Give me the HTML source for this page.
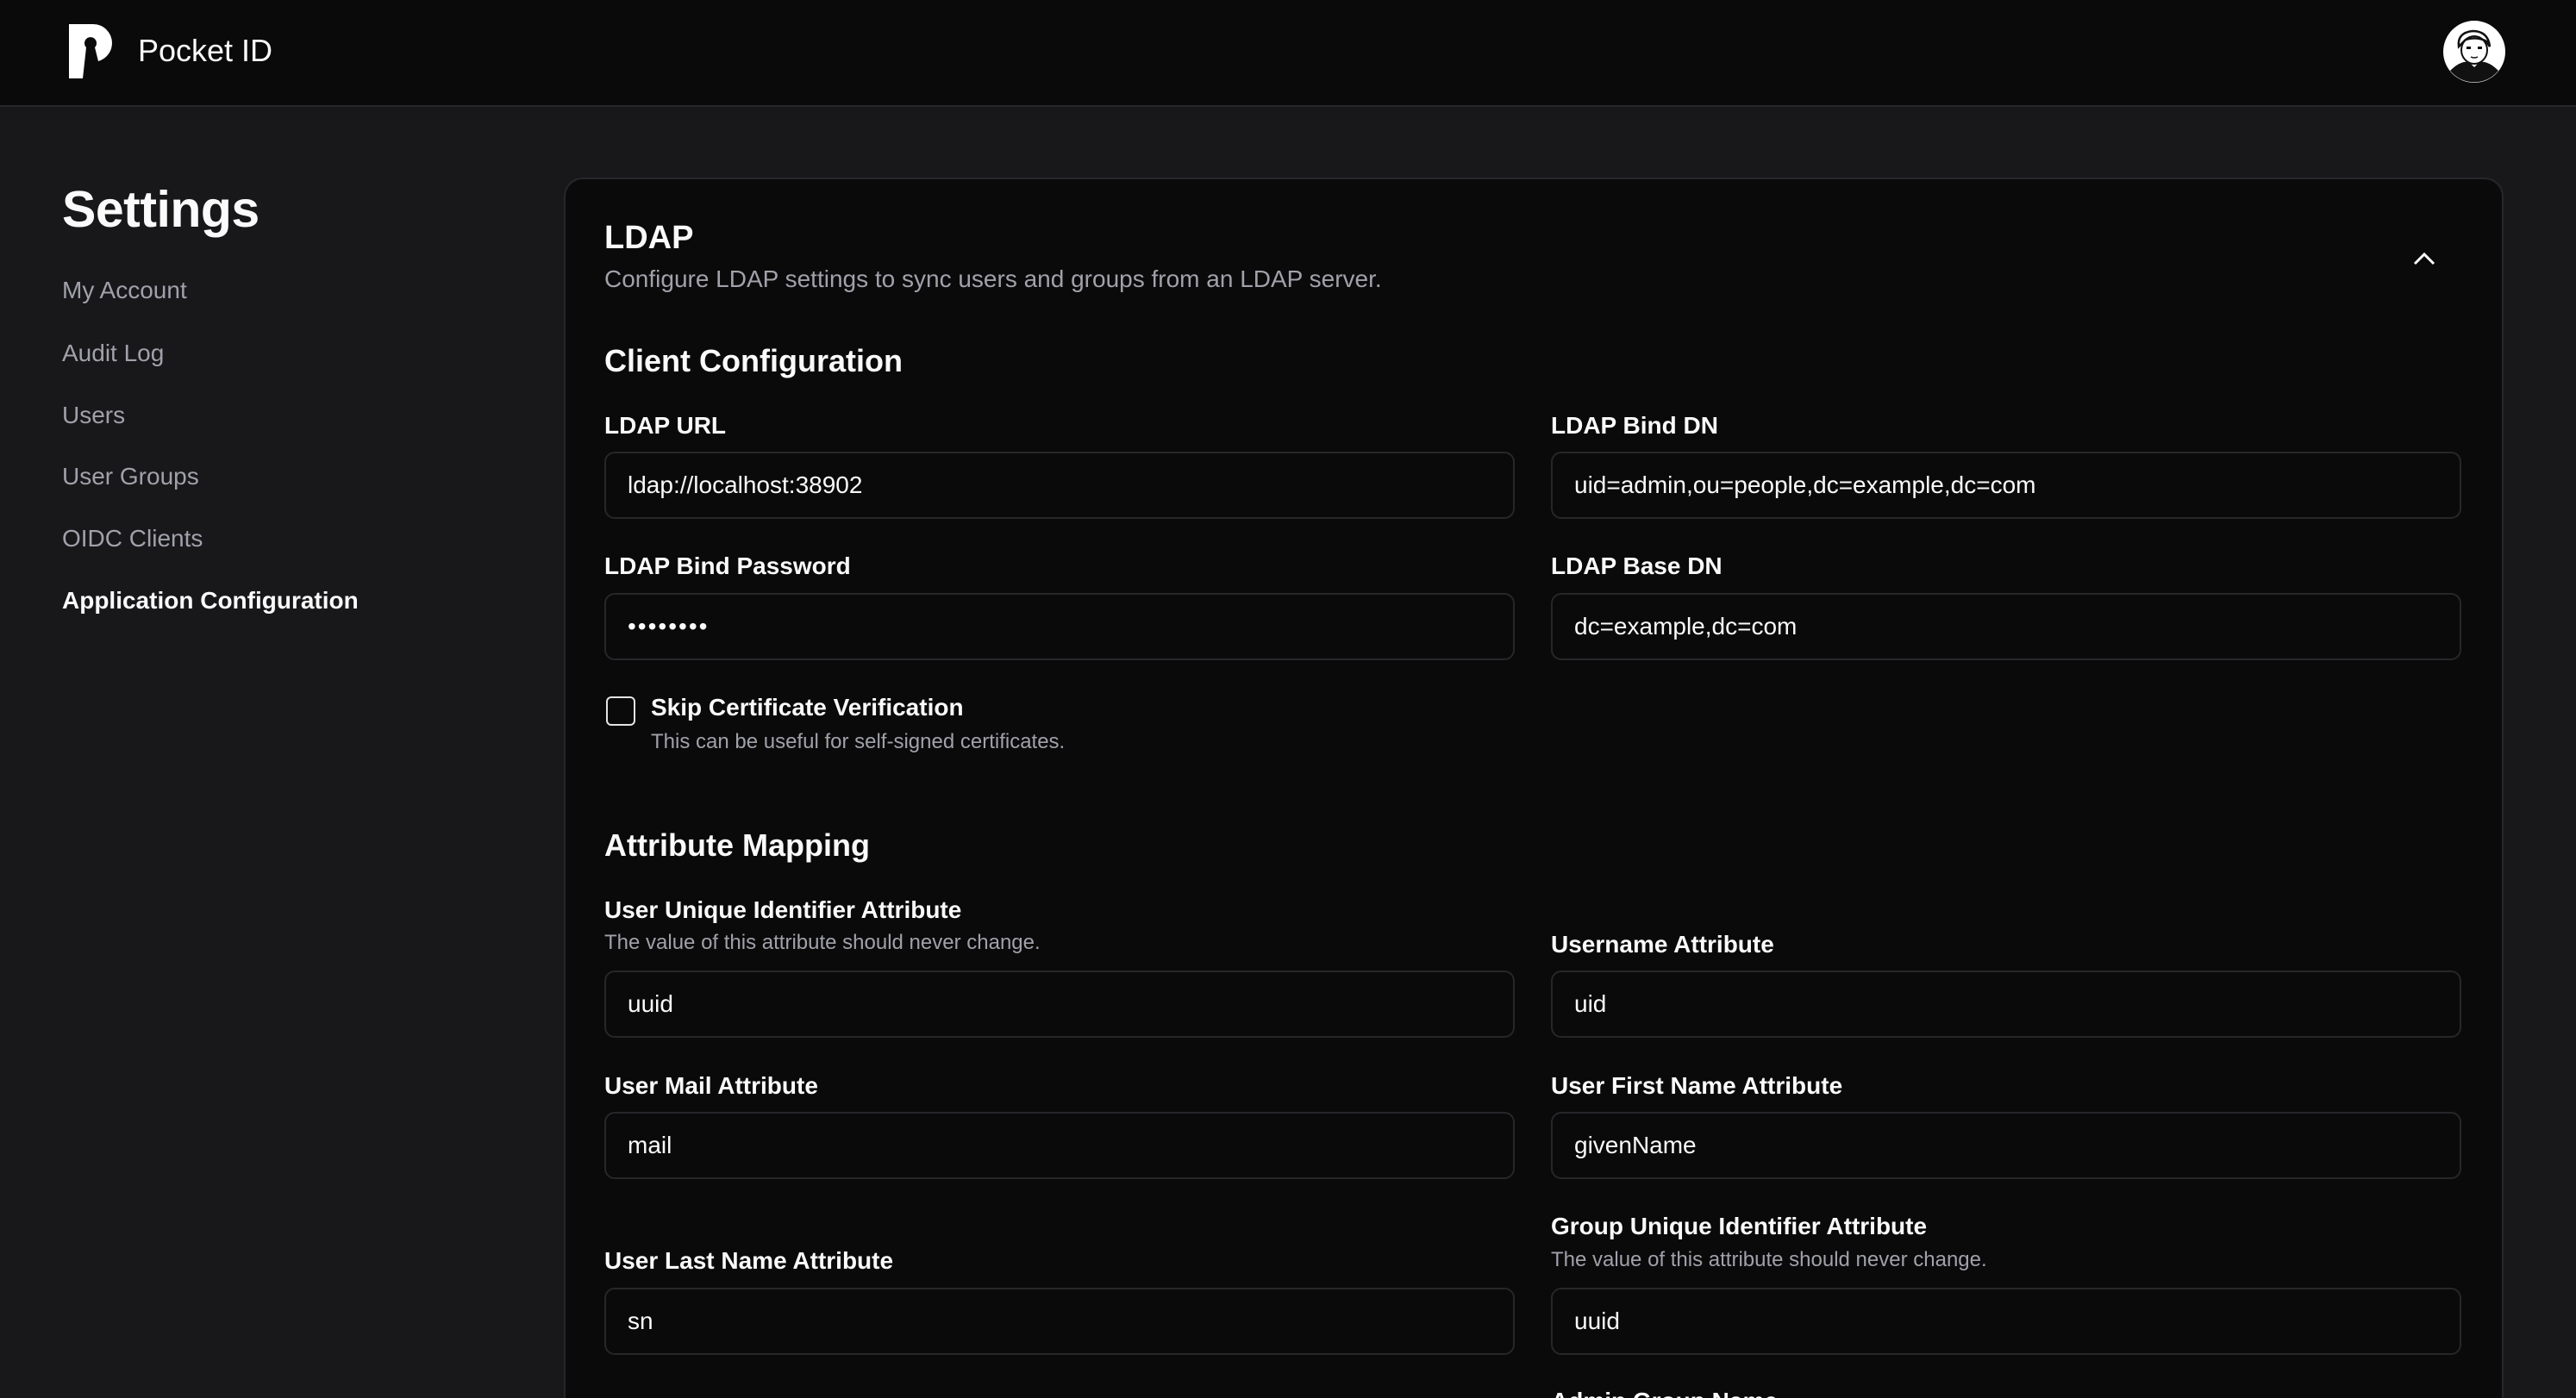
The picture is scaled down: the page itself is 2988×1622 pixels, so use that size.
<!DOCTYPE html>
<html><head><meta charset="utf-8"><style>
*{margin:0;padding:0;box-sizing:border-box}
html,body{width:2988px;height:1622px;overflow:hidden;background:#18181b;font-family:"Liberation Sans",Arial,sans-serif;color:#fafafa;position:relative}
.a{position:absolute;white-space:nowrap}
.hdr{position:absolute;left:0;top:0;width:2988px;height:124px;background:#0a0a0b;border-bottom:2px solid #27272a}
.nav{font-size:28px;color:#a1a1aa;left:72px;height:40px;line-height:40px}
.card{position:absolute;left:654px;top:206px;width:2250px;height:1416px;background:#0a0a0b;border:2px solid #27272a;border-bottom:none;border-radius:22px 22px 0 0}
.lbl{font-size:28px;font-weight:bold;height:36px;line-height:36px}
.sub{font-size:24px;color:#a1a1aa;height:32px;line-height:32px}
.inp{position:absolute;width:1056px;height:78px;border:2px solid #27272a;border-radius:12px;background:#0a0a0b;font-size:28px;line-height:74px;padding-left:25px;color:#fafafa}
.h2{font-size:36px;font-weight:bold;height:44px;line-height:44px}
</style></head><body>
<div class="hdr"></div>
<svg class="a" style="left:80px;top:28px" width="50" height="63" viewBox="0 0 50 63">
<path d="M0 0 H28 A22 22 0 0 1 50 22 A22 22 0 0 1 34 43 L30 27 A7 7 0 1 0 20 27 L16 63 H0 Z" fill="#fff"/>
</svg>
<div class="a" style="left:160px;top:38px;font-size:36px;line-height:42px;font-weight:500">Pocket ID</div>
<svg class="a" style="left:2834px;top:24px" width="72" height="72" viewBox="0 0 72 72">
<circle cx="36" cy="36" r="36" fill="#fff"/>
<path d="M8 58 Q20 46 30 48 L36 54 L42 48 Q52 46 64 58 A36 36 0 0 1 8 58Z" fill="#111"/>
<path d="M18 30 Q16 14 34 12 Q52 12 54 30 L50 24 Q40 18 26 22 Z" fill="none" stroke="#111" stroke-width="2.5"/>
<ellipse cx="36" cy="34" rx="15" ry="16" fill="none" stroke="#111" stroke-width="2"/>
<rect x="27" y="30" width="5" height="3" fill="#111"/><rect x="40" y="30" width="5" height="3" fill="#111"/>
<path d="M32 42 Q36 44 40 42" stroke="#111" stroke-width="1.5" fill="none"/>
</svg>
<div class="a" style="left:72px;top:207px;font-size:59px;font-weight:bold;line-height:72px;letter-spacing:-0.5px">Settings</div>
<div class="a nav" style="top:317px">My Account</div>
<div class="a nav" style="top:390px">Audit Log</div>
<div class="a nav" style="top:462px">Users</div>
<div class="a nav" style="top:533px">User Groups</div>
<div class="a nav" style="top:605px">OIDC Clients</div>
<div class="a nav" style="top:677px;color:#fafafa;font-weight:bold">Application Configuration</div>
<div class="card"></div>
<div class="a" style="left:701px;top:253px;font-size:38px;font-weight:bold;line-height:46px">LDAP</div>
<div class="a" style="left:701px;top:306px;font-size:28px;color:#a1a1aa;line-height:36px">Configure LDAP settings to sync users and groups from an LDAP server.</div>
<svg class="a" style="left:2798px;top:290px" width="28" height="20" viewBox="0 0 28 20"><path d="M3 16 L14 5 L25 16" stroke="#fafafa" stroke-width="3" fill="none"/></svg>
<div class="a h2" style="left:701px;top:397px">Client Configuration</div>
<div class="a lbl" style="left:701px;top:476px">LDAP URL</div>
<div class="a lbl" style="left:1799px;top:476px">LDAP Bind DN</div>
<div class="inp" style="left:701px;top:524px">ldap://localhost:38902</div>
<div class="inp" style="left:1799px;top:524px">uid=admin,ou=people,dc=example,dc=com</div>
<div class="a lbl" style="left:701px;top:639px">LDAP Bind Password</div>
<div class="a lbl" style="left:1799px;top:639px">LDAP Base DN</div>
<div class="inp" style="left:701px;top:688px;letter-spacing:2px">••••••••</div>
<div class="inp" style="left:1799px;top:688px">dc=example,dc=com</div>
<div class="a" style="left:703px;top:808px;width:34px;height:34px;border:2px solid #e4e4e7;border-radius:6px"></div>
<div class="a lbl" style="left:755px;top:803px">Skip Certificate Verification</div>
<div class="a sub" style="left:755px;top:845px">This can be useful for self-signed certificates.</div>
<div class="a h2" style="left:701px;top:959px">Attribute Mapping</div>
<div class="a lbl" style="left:701px;top:1038px">User Unique Identifier Attribute</div>
<div class="a sub" style="left:701px;top:1078px">The value of this attribute should never change.</div>
<div class="a lbl" style="left:1799px;top:1078px">Username Attribute</div>
<div class="inp" style="left:701px;top:1126px">uuid</div>
<div class="inp" style="left:1799px;top:1126px">uid</div>
<div class="a lbl" style="left:701px;top:1242px">User Mail Attribute</div>
<div class="a lbl" style="left:1799px;top:1242px">User First Name Attribute</div>
<div class="inp" style="left:701px;top:1290px">mail</div>
<div class="inp" style="left:1799px;top:1290px">givenName</div>
<div class="a lbl" style="left:1799px;top:1405px">Group Unique Identifier Attribute</div>
<div class="a sub" style="left:1799px;top:1446px">The value of this attribute should never change.</div>
<div class="a lbl" style="left:701px;top:1445px">User Last Name Attribute</div>
<div class="inp" style="left:701px;top:1494px">sn</div>
<div class="inp" style="left:1799px;top:1494px">uuid</div>
<div class="a" style="left:0;top:0;width:2988px;height:1622px;overflow:hidden;pointer-events:none"><div class="a lbl" style="left:1799px;top:1608px">Admin Group Name</div></div>
</body></html>
